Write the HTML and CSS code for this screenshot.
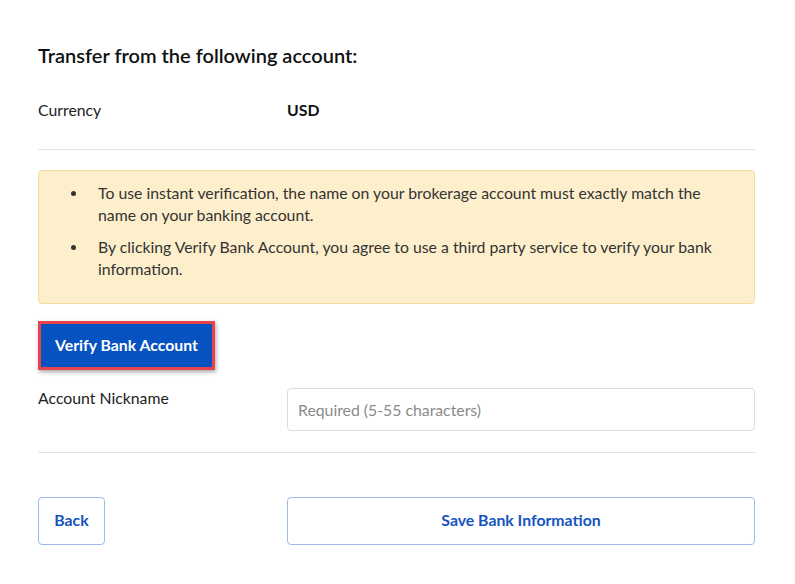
FILE: index.html
```html
<!DOCTYPE html>
<html>
<head>
<meta charset="utf-8">
<link rel="stylesheet" href="styles.css">
</head>
<body>
<div class="page">
  <h2 class="title">Transfer from the following account:</h2>
  <div class="row currency">
    <div class="label">Currency</div>
    <div class="value">USD</div>
  </div>
  <hr class="divider">
  <div class="alert">
    <ul>
      <li>To use instant verification, the name on your brokerage account must exactly match the name on your banking account.</li>
      <li>By clicking Verify Bank Account, you agree to use a third party service to verify your bank information.</li>
    </ul>
  </div>
  <div class="verify-wrap"><button class="verify">Verify Bank Account</button></div>
  <div class="row nickname">
    <div class="label">Account Nickname</div>
    <input class="input" type="text" placeholder="Required (5-55 characters)">
  </div>
  <hr class="divider">
  <div class="actions">
    <div class="back-col"><button class="btn-outline back">Back</button></div>
    <button class="btn-outline save">Save Bank Information</button>
  </div>
</div>
</body>
</html>
```
FILE: styles.css
```css
* { box-sizing: border-box; }
html, body { margin: 0; padding: 0; background: #fff; }
body { font-family: "Lato", "Liberation Sans", sans-serif; color: #222; }
.page { width: 795px; padding: 42px 40px 0 38px; }
.title { margin: 0; font-size: 20px; font-weight: 600; color: #111; line-height: 26px; }
.row { display: flex; }
.label { width: 249px; flex: none; font-size: 15.8px; color: #222; }
.currency { margin-top: 32px; line-height: 20px; }
.value { font-size: 15.8px; font-weight: 700; color: #111; }
.divider { border: 0; border-top: 1px solid #e2e2e2; margin: 0; }
.currency + .divider { margin-top: 29px; }
.alert { margin-top: 20px; background: #fdefcc; border: 1px solid #f7dd9a; border-radius: 4px; padding: 11px 20px 23px 20px; }
.alert ul { margin: 0; padding: 0; list-style: none; }
.alert li { display: flex; font-size: 15.8px; line-height: 22px; color: #333; margin-bottom: 10px; }
.alert li::before { content: ""; flex: none; width: 5px; height: 5px; border-radius: 50%; background: #333; margin: 9px 22px 0 12px; }
.alert li:last-child { margin-bottom: 0; }
.verify-wrap { margin-top: 17px; }
.verify { background: #0652c0; color: #fff; border: 3px solid #e8434a; font-family: inherit; font-size: 15.8px; font-weight: 700; height: 49px; padding: 0 14px 2px; box-shadow: 1px 2px 4px rgba(0,0,0,0.35); cursor: pointer; }
.nickname { margin-top: 18px; align-items: flex-start; }
.nickname .label { line-height: 20px; }
.input { flex: 1; height: 43px; border: 1px solid #dcdcdc; border-radius: 4px; padding: 0 10px; font-family: inherit; font-size: 15.8px; margin-top: 0; }
.input::placeholder { color: #8a8a8a; }
.nickname + .divider { margin-top: 21px; }
.actions { display: flex; margin-top: 44px; }
.back-col { width: 249px; flex: none; }
.btn-outline { background: #fff; border: 1px solid #9dbbea; border-radius: 4px; color: #1553c0; font-family: inherit; font-size: 15.8px; font-weight: 700; height: 48px; padding: 0 6px 3px; cursor: pointer; }
.back { width: 67px; }
.save { flex: 1; }
```
